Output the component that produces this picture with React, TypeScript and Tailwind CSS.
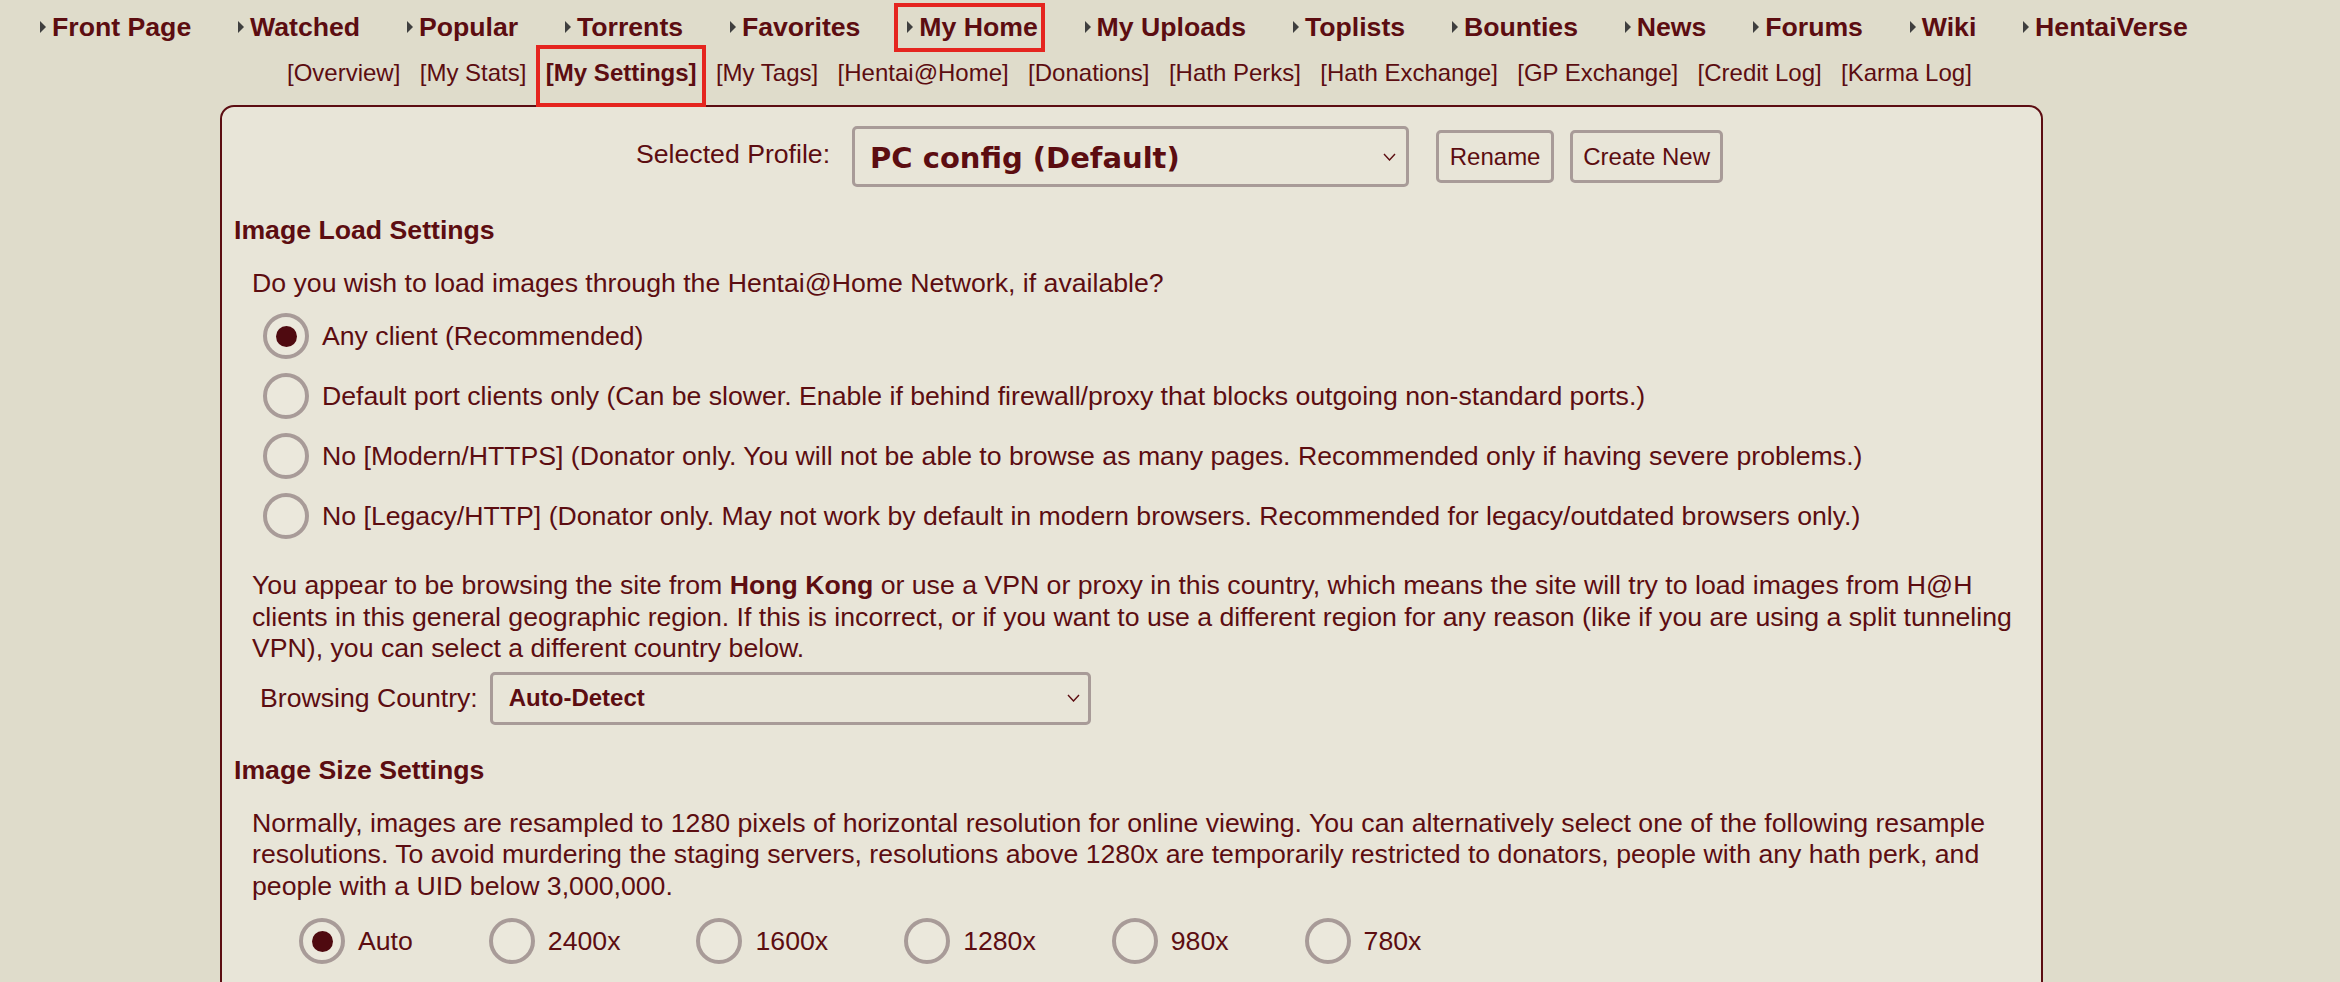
import React from "react"

const navItems = ["Front Page", "Watched", "Popular", "Torrents", "Favorites", "My Home", "My Uploads", "Toplists", "Bounties", "News", "Forums", "Wiki", "HentaiVerse"]
const subItems = ["Overview", "My Stats", "My Settings", "My Tags", "Hentai@Home", "Donations", "Hath Perks", "Hath Exchange", "GP Exchange", "Credit Log", "Karma Log"]

const loadOptions = [
  "Any client (Recommended)",
  "Default port clients only (Can be slower. Enable if behind firewall/proxy that blocks outgoing non-standard ports.)",
  "No [Modern/HTTPS] (Donator only. You will not be able to browse as many pages. Recommended only if having severe problems.)",
  "No [Legacy/HTTP] (Donator only. May not work by default in modern browsers. Recommended for legacy/outdated browsers only.)",
]
const sizeOptions = ["Auto", "2400x", "1600x", "1280x", "980x", "780x"]

function Arrow() {
  return (
    <svg width="6" height="12" viewBox="0 0 6 12" className="mr-[6px] shrink-0">
      <path d="M0 0 L6 6 L0 12 Z" fill="#3f3f3f" />
    </svg>
  )
}

function Chevron() {
  return (
    <svg width="13" height="8" viewBox="0 0 13 8" className="shrink-0">
      <path d="M1 1 L6.5 7 L12 1" fill="none" stroke="#5c0d11" strokeWidth="1.4" />
    </svg>
  )
}

function Radio({ checked }: { checked?: boolean }) {
  return (
    <span className="flex h-[46px] w-[46px] shrink-0 items-center justify-center rounded-full border-4 border-[#a89b98] bg-[#ebe8dc]">
      {checked && <span className="h-[21px] w-[21px] rounded-full bg-[#4f0a10]" />}
    </span>
  )
}

export default function App() {
  return (
    <div className="h-screen overflow-hidden bg-[#dfdccb] font-['Liberation_Sans',Arial,sans-serif] text-[#5c0d11]">
      {/* main nav */}
      <div className="flex h-[54px] items-center gap-[46.8px] pl-[40px] text-[26.67px] font-bold whitespace-nowrap">
        {navItems.map(item => (
          <span key={item} className="relative flex h-full items-center">
            <Arrow />
            {item}
            {item === "My Home" && (
              <span className="absolute top-[3px] bottom-[2px] left-[-13px] right-[-7px] z-10 border-4 border-[#e5251f]" />
            )}
          </span>
        ))}
      </div>

      {/* sub nav */}
      <div className="flex h-[38px] items-center gap-[19.4px] pl-[287px] text-[24px] whitespace-nowrap">
        {subItems.map(item => (
          <span key={item} className={`relative flex h-full items-center ${item === "My Settings" ? "font-bold" : ""}`}>
            [{item}]
            {item === "My Settings" && (
              <span className="absolute top-[-9px] bottom-[-15px] left-[-10px] right-[-9px] z-10 border-4 border-[#e5251f]" />
            )}
          </span>
        ))}
      </div>

      {/* settings box */}
      <div className="mt-[13px] ml-[220px] w-[1823px] rounded-[14px] border-2 border-[#5c0d12] bg-[#e8e5d8] px-[12px] pt-[19px] pb-[60px] text-[26.67px]">
        <div className="ml-[402px] flex h-[61px] items-center">
          <span className="relative top-[-3px]">Selected Profile:</span>
          <div className="ml-[22px] flex h-[61px] w-[557px] items-center justify-between rounded-[5px] border-[3px] border-[#a89b98] pl-[15px] pr-[10px]">
            <span className="relative top-[2px] font-['DejaVu_Sans',Verdana,sans-serif] text-[29px] font-bold">PC config (Default)</span>
            <Chevron />
          </div>
          <button className="ml-[27px] h-[53px] w-[118px] rounded-[5px] border-[3px] border-[#a89b98] text-[24px]">Rename</button>
          <button className="ml-[16px] h-[53px] w-[153px] rounded-[5px] border-[3px] border-[#a89b98] text-[24px]">Create New</button>
        </div>

        <h2 className="mt-[28px] font-bold leading-[31px]">Image Load Settings</h2>
        <p className="mt-[22px] ml-[18px] leading-[31px]">Do you wish to load images through the Hentai@Home Network, if available?</p>

        <div className="mt-[14px] ml-[29px] flex flex-col gap-[14px]">
          {loadOptions.map((opt, i) => (
            <div key={opt} className="flex h-[46px] items-center gap-[13px]">
              <Radio checked={i === 0} />
              <span className="leading-[31px]">{opt}</span>
            </div>
          ))}
        </div>

        <p className="mt-[31px] ml-[18px] leading-[31.5px]">
          You appear to be browsing the site from <b>Hong Kong</b> or use a VPN or proxy in this country, which means the site will try to load images from H@H clients in this general geographic region. If this is incorrect, or if you want to use a different region for any reason (like if you are using a split tunneling VPN), you can select a different country below.
        </p>

        <div className="mt-[7px] ml-[26px] flex h-[53px] items-center">
          <span>Browsing Country:</span>
          <div className="ml-[12px] flex h-[53px] w-[601px] items-center justify-between rounded-[5px] border-[3px] border-[#a89b98] pl-[16px] pr-[8px]">
            <span className="text-[24px] font-bold">Auto-Detect</span>
            <Chevron />
          </div>
        </div>

        <h2 className="mt-[30px] font-bold leading-[31px]">Image Size Settings</h2>
        <p className="mt-[22px] ml-[18px] leading-[31.5px]">
          Normally, images are resampled to 1280 pixels of horizontal resolution for online viewing. You can alternatively select one of the following resample resolutions. To avoid murdering the staging servers, resolutions above 1280x are temporarily restricted to donators, people with any hath perk, and people with a UID below 3,000,000.
        </p>

        <div className="mt-[16px] ml-[65px] flex gap-[76px]">
          {sizeOptions.map((opt, i) => (
            <div key={opt} className="flex h-[46px] items-center gap-[13px]">
              <Radio checked={i === 0} />
              <span>{opt}</span>
            </div>
          ))}
        </div>
      </div>
    </div>
  )
}
